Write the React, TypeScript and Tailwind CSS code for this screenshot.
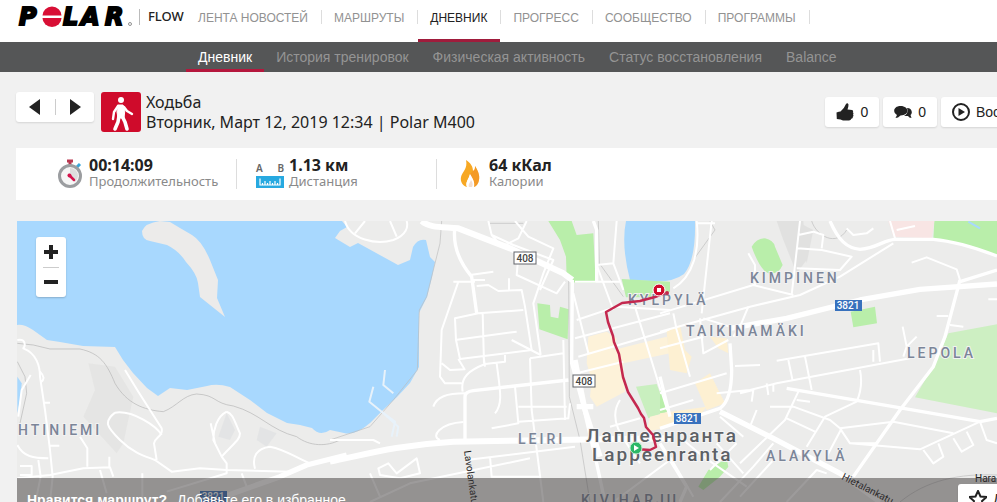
import React from "react";

const sections = ["ЛЕНТА НОВОСТЕЙ", "МАРШРУТЫ", "ДНЕВНИК", "ПРОГРЕСС", "СООБЩЕСТВО", "ПРОГРАММЫ"];
const pages = ["Дневник", "История тренировок", "Физическая активность", "Статус восстановления", "Balance"];

function PolarLogo() {
  return (
    <svg width="118" height="34" viewBox="0 0 118 34" role="img" aria-label="Polar">
      <g
        className="fill-black stroke-black text-[24px] font-bold italic font-['DejaVu_Sans',sans-serif]"
        strokeWidth="2"
      >
        <text x="3" y="25">P</text>
        <text x="47" y="25">L</text>
        <text x="65" y="25">A</text>
        <text x="89" y="25">R</text>
      </g>
      <path d="M26.500 15.500a9.500 9 0 0 1 19 0Z" fill="#d80f35" />
      <path d="M26.500 18a9.500 9 0 0 0 19 0Z" fill="#d80f35" />
      <circle cx="114" cy="24" r="1.5" fill="none" stroke="#777" strokeWidth="0.8" />
    </svg>
  );
}

function Header() {
  return (
    <header>
      <div className="flex h-[42px] items-stretch bg-white pl-4">
        <a href="#home" className="w-[123px]">
          <PolarLogo />
        </a>
        <a href="#flow" className="flex w-[47px] items-center pb-2 text-[13px] font-medium text-[#222] font-['Noto_Sans',sans-serif]">
          <span className="mr-2 h-4 w-px bg-[#bbb]" />
          FLOW
        </a>
        <nav className="flex text-[12px]">
          {sections.map((s) => (
            <div key={s} className="flex">
              <a
                href="#section"
                className={
                  s === "ДНЕВНИК"
                    ? "flex items-center border-b-[3px] border-[#a01c3c] pr-[13px] pb-1 pl-3 text-[#222]"
                    : "flex items-center border-b-[3px] border-transparent pr-[13px] pb-1 pl-3 text-[#929292]"
                }
              >
                {s}
              </a>
              <span className="mt-[10px] h-[14px] w-px bg-[#ddd]" />
            </div>
          ))}
        </nav>
      </div>
      <nav className="flex h-[30px] bg-[#555657] pl-[186px] text-[14px]">
        {pages.map((p) => (
          <a
            key={p}
            href="#page"
            className={
              p === "Дневник"
                ? "flex items-center border-b-[3px] border-[#b5173d] px-3 pt-[3px] text-white"
                : "flex items-center border-b-[3px] border-transparent px-3 pt-[3px] text-[#949494]"
            }
          >
            {p}
          </a>
        ))}
      </nav>
    </header>
  );
}

const pill =
  "flex h-[30px] items-center gap-[6px] rounded-[3px] bg-white px-[11px] text-[14px] text-[#222] shadow-[0_1px_2px_rgba(0,0,0,0.12)]";

function SessionBar() {
  return (
    <div className="flex items-start pt-5 pl-4">
      <div className="flex h-[30px] w-[78px] items-center justify-between rounded-[3px] bg-white px-3 shadow-[0_1px_2px_rgba(0,0,0,0.12)]">
        <button aria-label="Предыдущая">
          <svg width="13" height="16" viewBox="0 0 13 16"><path d="M12 0v16L1 8Z" fill="#222" /></svg>
        </button>
        <span className="h-4 w-px bg-[#ccc]" />
        <button aria-label="Следующая">
          <svg width="13" height="16" viewBox="0 0 13 16"><path d="M1 0v16L12 8Z" fill="#222" /></svg>
        </button>
      </div>
      <div className="ml-[7px] h-10 w-10 rounded-[3px] bg-[#cf0b2b]">
        <svg width="40" height="40" viewBox="0 0 40 40" fill="none" stroke="#fff" strokeLinecap="round" strokeLinejoin="round">
          <circle cx="20" cy="8" r="3" fill="#fff" stroke="none" />
          <path d="M17 13h5l2 4-1 9h-6l-1-6Z" fill="#fff" strokeWidth="1" />
          <path d="m17 14-4 6-1 7M23 15l3 4 5 3" strokeWidth="2.4" />
          <path d="m18 24-1 6-3 7M21 24l3 6 2 7" strokeWidth="3.6" />
        </svg>
      </div>
      <h1 className="ml-[5px] flex-1 text-[16px] leading-5 text-[#222] font-['Noto_Sans',sans-serif]">
        Ходьба
        <br />
        Вторник, Март 12, 2019 12:34 | Polar M400
      </h1>
      <div className="mt-[5px] flex gap-1">
        <button className={pill}>
          <svg width="18" height="18" viewBox="0 0 18 18" fill="#222">
            <path d="M.5 9.500Q3 8.500 4.500 8.500 8.500 5 10 1q1.500-1.500 2.500.500Q12.500 4 11.500 6.500L16 7q1.800.8.800 2.300 1.200 1 .2 2.300 1 1.200-.2 2.200.4 1.700-1.500 2-.5 1.700-2.300 1.700L7 17.500 4.500 16.500.8 16Z" />
          </svg>
          0
        </button>
        <button className={pill}>
          <svg width="18" height="14" viewBox="0 0 18 14" fill="#222">
            <path d="M13 3c5 0 6 5 3.500 7l1 3q-2.500 0-3.500-2L10 11q5-3 3-8Z" />
            <path d="M6.500 1c9 0 9.500 9.500 0 9.500Q4 13 1.500 13L3 10C-2 7 0 1 6.500 1Z" />
          </svg>
          0
        </button>
        <button className={pill + " w-[160px]"}>
          <svg width="18" height="18" viewBox="0 0 18 18">
            <circle cx="9" cy="9" r="8" fill="none" stroke="#222" strokeWidth="2" />
            <path d="M6.500 5v8l6.500-4Z" fill="#222" />
          </svg>
          Вос
        </button>
      </div>
    </div>
  );
}

function Stopwatch() {
  return (
    <svg width="26" height="30" viewBox="0 0 26 30">
      <path d="M10 2h6M13 2v5" stroke="#b93850" strokeWidth="3" />
      <path d="m20 8 3-3" stroke="#3aa6d8" strokeWidth="3" />
      <circle cx="13" cy="17" r="10.500" fill="#f6f6f6" stroke="#9b9da0" strokeWidth="3" />
      <path d="M13 9a8 8 0 0 1 8 8 8 8 0 0 1-3 6l-5-6Z" fill="#dedede" />
      <path d="m12 16 5 5" stroke="#d4144c" strokeWidth="2.500" strokeLinecap="round" />
      <circle cx="12.500" cy="16.500" r="2" fill="#d4144c" />
    </svg>
  );
}

function Ruler() {
  return (
    <div className="w-7 font-['Noto_Sans',sans-serif]">
      <div className="flex justify-between text-[10px] leading-4 font-semibold text-[#666]">
        <span>A</span>
        <span>B</span>
      </div>
      <svg width="28" height="12" viewBox="0 0 28 12">
        <path d="M0 0h28v12H0Z" fill="#27a9e0" />
        <path d="M4 2.500v6.500h20V2.500M9 5v4M14 5v4M19 5v4M6.500 7v2M11.500 7v2M16.500 7v2M21.500 7v2" fill="none" stroke="#fff" strokeWidth="1.200" />
      </svg>
    </div>
  );
}

function Flame() {
  return (
    <svg width="20" height="28" viewBox="0 0 20 28">
      <path d="M6 0c5 3 7 7 7 11 2-1 2-3 2-5 3 5 5 9 4 14-.5 3-2 6-5 7 1-5-1-8-4-13-1 5-5 8-3 13C3 26 0 22 1 17 2 12 8 9 6 0Z" fill="#f7a823" />
      <path d="M10 14c3 5 5 8 4 13H7c-2-5 2-8 3-13Z" fill="#fff" />
      <path d="M11 20c2 3 2 5 1 7H9c-1-3 1-4 2-7Z" fill="#f3ded0" />
      <path d="M15 6c3 5 5 9 4 14-.5 3-2 6-5 7 1-5-1-8-4-13l3-3c2-1 2-3 2-5Z" fill="#f28c28" opacity=".5" />
    </svg>
  );
}

const stats = [
  { icon: <Stopwatch />, value: "00:14:09", label: "Продолжительность" },
  { icon: <Ruler />, value: "1.13 км", label: "Дистанция" },
  { icon: <Flame />, value: "64 кКал", label: "Калории" },
];

function Stats() {
  return (
    <dl className="mt-4 ml-4 flex h-[52px] items-center bg-white pl-5">
      {stats.map((s, i) => (
        <div key={s.label} className="flex w-[200px] items-center">
          <div className={i === 0 ? "h-[30px] w-px" : "h-[30px] w-px bg-[#ddd]"} />
          <div className="mr-[5px] ml-[19px] flex w-7 justify-center">{s.icon}</div>
          <div className="flex flex-col-reverse pb-[2px] font-['Noto_Sans',sans-serif]">
            <dt className="text-[13px] leading-4 text-[#8a8a8a]">{s.label}</dt>
            <dd className="text-[16px] leading-4 font-bold text-[#222]">{s.value}</dd>
          </div>
        </div>
      ))}
    </dl>
  );
}

// The map sheet is drawn in three tiles at triple scale; labels and markers sit on top at 1:1.
function WestTile() {
  return (
    <g>
      <path d="M265 460 345 470 400 560 370 700 350 730 250 620 285 540Z" fill="#e2e2e1" opacity=".7" />
      <path d="M680 610 705 660 690 690 655 680ZM780 650 830 670 800 710 770 690Z" fill="#e0e1e2" opacity=".7" />
      <path d="M52 500 65 520 62 560 52 610Z" fill="#a8d8fe" />
      <path d="M52 455 75 500 80 550 60 640M52 400 100 405 150 417H240C300 430 320 460 345 520 380 580 430 600 490 605 530 590 550 555 590 552 650 555 640 580 700 588 780 610 810 660 890 680 930 710 980 710 1020 690" stroke="#b5b5b5" strokeWidth="2" />
      <g stroke="#fff" strokeWidth="6">
        <path d="M52 390C80 385 75 410 70 415 110 430 120 470 120 500L135 600 150 720 158 800 150 876M92 495 65 540 55 620M120 485q20 20 2 32M130 578h20M148 707h30" />
        <path d="M375 480 415 545 485 655C490 680 465 680 462 700L470 750M345 608C400 600 470 650 485 675M345 608C310 635 320 650 360 690 400 730 440 740 465 750L515 785 600 775 680 780 870 785" />
        <path d="M680 605C650 620 640 660 640 690L665 740C700 700 720 690 720 670 705 640 700 610 680 605M632 640 645 700M665 740 680 760V790L500 845M765 776C755 740 770 715 810 710 860 720 880 740 930 760M725 790 740 830" />
        <path d="M52 705C70 740 100 745 145 745M240 680 262 715V770M60 768H95V795H60M115 750 122 800 110 860M52 805 150 795 250 775 330 772 340 800M328 740V770M300 780 320 850M427 790V876" />
      </g>
      <path d="M1040 735 920 765 840 800 700 850 600 890" stroke="#fff" strokeWidth="16" />
    </g>
  );
}

function CentreTile() {
  return (
    <g>
      <path d="M655 33H725L740 75 790 70 797 218H735L710 205 708 140 690 90ZM622 280 660 285 662 320 685 325 690 290 716 298 713 388 628 358ZM875 207 1020 215 1020 245 960 262H888Z" fill="#b9eeaa" />
      <path d="M918 530 980 522 1012 605 955 625Z" fill="#c9efbf" />
      <path d="M775 380 830 365 860 385 850 420 1010 380 1020 430 880 460 885 545 800 590 780 560 785 510 770 460ZM960 620 1020 605V650L950 665Z" fill="#fdf2d9" />
      <g stroke="#bdbdbd" strokeWidth="2">
        <path d="M335 33 330 100 290 260 268 300 262 480 190 570 120 650 0 690M716 200 718 560 750 690 780 876M480 40H580M805 33 808 160 880 260" />
      </g>
      <g stroke="#fff" strokeWidth="6">
        <path d="M45 33C60 90 140 105 190 90 230 75 235 50 230 33M105 33 75 70M180 33 200 80M475 33 485 75 550 105 670 150 630 240M485 75 515 110 565 85 590 33M555 33 595 80 670 115 640 190 610 280 632 435M565 140 560 195 680 250 705 215" />
        <path d="M420 195 490 185M425 210H465M440 228 475 225 505 243 575 240 585 290 605 420 390 447 378 390 375 325 445 310 580 300M385 215 335 360 330 500 345 520H395M458 310 462 460M370 215H435M375 390 560 365M385 447 405 480M537 205V240M335 460 360 480 405 478M525 435V455L465 462C420 480 390 500 398 545M500 460C510 540 520 580 495 610M310 590C320 560 350 550 405 550M460 435 465 470" />
        <path d="M600 445 605 600 640 876M600 445 700 430M545 390 632 435M555 530 565 640 485 655M565 590H710M565 635 715 625 720 580M700 390 705 630M740 330 860 290 1020 300M735 385 1020 310M745 440 1020 360M740 490 880 455M800 165 850 160 860 33M800 165 850 300M730 250 775 430M915 290 1010 600M870 570C850 600 845 640 890 700L930 760M840 650 930 625M850 160 880 240M735 215 870 215" />
        <path d="M480 740 485 800H630M410 750 735 710M145 775 175 760 200 790 260 745 270 790 210 805 150 795ZM120 790 150 860M330 690C300 680 330 640 400 636M0 690 130 690 150 700M120 876 240 820 600 745M850 876 1020 750" />
        <path d="M165 480 160 525 190 550M130 530 118 575 155 605 205 650 200 680M155 605 195 635 185 680" stroke="#e8f2fa" />
      </g>
      <g stroke="#fff" strokeWidth="10">
        <path d="M375 50C365 120 400 170 425 200L440 310M405 690V560Q405 545 430 542L715 510M790 33 800 60V215M727 210 725 460 760 590 800 760 825 876" />
      </g>
      <path d="M275 33C300 55 340 50 385 55L540 115 700 190 727 210" stroke="#fff" strokeWidth="18" />
      <path d="M0 755C100 735 200 705 370 695L1020 685" stroke="#fff" strokeWidth="18" />
      <path d="M735 450 765 600 810 740M740 590 790 590" stroke="#fff" strokeWidth="16" />
    </g>
  );
}

function EastTile() {
  return (
    <g>
      <path d="M350 33 430 33 440 150 410 190 370 90ZM420 40 460 60 440 160Z" fill="#dddddc" opacity=".7" />
      <path d="M275 110Q290 85 315 85 340 90 345 110L368 165Q355 195 325 190 300 180 275 110ZM572 305 645 290 651 340 580 352ZM823 33H1011V138L900 100 820 88ZM0 540 20 605 0 615ZM145 780 200 745 205 770 180 800 130 840 115 830Z" fill="#b9eeaa" />
      <path d="M865 370 1011 343V610L765 562 830 450Z" fill="#cdefc2" />
      <path d="M685 33H823L815 85 700 80Z" fill="#f8e5e4" />
      <path d="M20 365 60 345 75 420 95 440 80 490 30 480ZM150 380 200 385 205 430 175 415ZM105 520 150 490 195 580 140 600ZM0 610 140 590 110 630 0 650Z" fill="#fdf0d2" />
      <path d="M150 33 165 60 100 150M455 33C470 80 530 110 560 60M720 876C800 810 900 790 1011 795" stroke="#bdbdbd" strokeWidth="2" />
      <path d="M925 35 960 55" stroke="#a8d8fe" strokeWidth="6" />
      <g stroke="#fff" strokeWidth="6">
        <path d="M110 33C120 120 100 200 40 235M155 33 125 310M110 40H165M0 310 280 225 400 255M420 33 395 255M415 75 460 65 490 75 485 115M412 115 485 120 575 140 540 180 410 175M265 130 285 165V225M0 365 270 290 420 255 540 200 700 100M40 310 50 360 90 500M560 55 580 75 620 70 640 55M690 33 705 85M710 60 765 48M755 158 800 142 890 178 900 210M870 345 910 350M830 318H865M985 268H1011" />
        <path d="M265 290 240 350 220 380M120 325 130 430 205 390M130 325 210 350M0 415 130 380M225 468 300 465M0 550 200 490M0 600 100 570M350 452 655 400 660 455M385 450 397 508M435 440 455 540M640 420V455M170 550 270 540 350 520 750 445M728 350 740 410 730 440M740 410 770 380M320 520 325 555M340 520V545M240 550 280 540 275 575M600 480Q610 530 590 575L495 620 440 710M415 545 375 630 240 760M330 590 400 590 510 630 540 655 570 700 780 718 960 635M540 655 700 635 880 670M380 625 465 665M410 570 450 575M545 655 500 740M570 700H650M790 720 820 760 850 740 835 700M880 685 905 725 940 705 920 665M960 635 980 690 1011 700M240 630 270 650 290 600M180 620 250 680M230 700 150 780M170 700 250 790M30 740 100 860M70 690 130 740 260 830M240 860 340 750M380 876 470 780 500 790M180 876 280 770 340 700" />
      </g>
      <g stroke="#fff" strokeWidth="10">
        <path d="M510 33C535 90 560 115 600 118 650 115 670 90 705 88H820Q900 95 1011 138M210 400 215 480Q215 570 180 595L0 655M900 210 855 380 820 470 720 600 580 800M380 535 700 590 960 635 1011 625M900 215 1011 180M0 500 30 620M0 700 80 830 60 876" />
      </g>
      <path d="M210 355 380 325 600 270 780 238 1011 222" stroke="#fff" strokeWidth="16" />
      <path d="M180 605 340 685 540 790 660 876" stroke="#fff" strokeWidth="16" />
    </g>
  );
}

const districts = [
  { name: "HTINIEMI", x: 18, y: 435 },
  { name: "KIMPINEN", x: 750, y: 283 },
  { name: "KYLPYLÄ", x: 628, y: 305 },
  { name: "TAIKINAMÄKI", x: 686, y: 336 },
  { name: "LEPOLA", x: 907, y: 358 },
  { name: "LEIRI", x: 518, y: 444 },
  { name: "ALAKYLÄ", x: 766, y: 461 },
  { name: "KIVIHARJU", x: 581, y: 505 },
];

const shields = [
  { no: "408", x: 514, y: 252, blue: false },
  { no: "408", x: 573, y: 375, blue: false },
  { no: "3821", x: 835, y: 300, blue: true },
  { no: "3821", x: 674, y: 413, blue: true },
  { no: "3821", x: 200, y: 491, blue: true },
];

function RouteMap() {
  return (
    <svg className="block h-full w-full font-['Roboto',sans-serif]" role="img" aria-label="Lappeenranta">
      <g transform="translate(-17 -221)">
        <g fill="none" strokeLinejoin="round">
          <path
            fill="#a8d8fe"
            d="M17 221H342L347 227 340 231 335 238 350 247 358 243 398 265 410 260 413 247Q418 238 426 240L430 257 435 262 432 277 427 297 419 313V367L410 383 397 397 383 410 370 423Q355 436 344 433L330 430Q320 437 312 428L300 425 287 423 267 413 250 400 230 387Q217 383 207 386L187 390 170 388 158 396 147 388 133 373 123 360 115 347 83 346 60 342 47 340 33 330Q24 324 17 325Z"
          />
          <path
            fill="#ecebea"
            d="M160 221Q145 223 142 231 142 240 150 241L167 245Q179 251 186 262 197 274 198 283L200 297 225 317 217 298 218 280 210 260Q202 241 192 235L180 228 170 222Z"
          />
          <path fill="#a8d8fe" d="M626 221H695Q696 260 684 274 672 283 650 281L630 280Q621 245 626 221Z" />
          <g transform="translate(0 210) scale(0.33333)"><WestTile /></g>
          <g transform="translate(330 210) scale(0.33333)"><CentreTile /></g>
          <g transform="translate(660 210) scale(0.33333)"><EastTile /></g>
        </g>
        <g
          className="fill-[#7b8598] stroke-[#f2f2f2] text-[14px] font-medium tracking-[3px]"
          strokeWidth="2"
          paintOrder="stroke"
        >
          {districts.map((d) => (
            <text key={d.name} x={d.x} y={d.y}>{d.name}</text>
          ))}
        </g>
        <g className="fill-[#5d6166] stroke-[#f5f5f5] text-[19px] font-medium tracking-[2px]" strokeWidth="2" paintOrder="stroke">
          <text x="586" y="442">Лаппеенранта</text>
          <text x="592" y="461">Lappeenranta</text>
        </g>
        <g className="fill-[#222] text-[10px]">
          <text transform="translate(464 451) rotate(82)">Lavolankatu</text>
          <text transform="translate(841 479) rotate(27)">Hietalankatu</text>
          <text x="975" y="482">Hara</text>
        </g>
        {shields.map((s) => (
          <g key={s.no + s.x} className="text-[10px] font-medium">
            <rect
              x={s.x}
              y={s.y}
              width={s.blue ? 27 : 22}
              height={s.blue ? 11 : 12}
              fill={s.blue ? "#3871bd" : "#fff"}
              stroke={s.blue ? "none" : "#62656b"}
            />
            <text x={s.x + (s.blue ? 13 : 11)} y={s.y + (s.blue ? 9 : 10)} textAnchor="middle" fill={s.blue ? "#fff" : "#444"}>
              {s.no}
            </text>
          </g>
        ))}
        <path
          d="m665 293-10 4-15 4-18 2-16 9 2 10 5 14 1 6 5 12 4 23 4 12 1 3 10 16 3 6 3 4 2 9 7 8 3 12-6 3-15-1"
          fill="none"
          stroke="#c4284f"
          strokeWidth="2.5"
          strokeLinejoin="round"
        />
        <circle cx="667" cy="293" r="2" fill="#c4284f" />
        <circle cx="659" cy="290" r="6" fill="#cf0b2b" stroke="#fff" strokeWidth="1" />
        <rect x="657" y="288" width="4" height="4" fill="#fff" />
        <circle cx="636" cy="448" r="6" fill="#2bb866" stroke="#c5ecd2" strokeWidth="1" />
        <path d="m634 445 5 3-5 3Z" fill="#fff" />
      </g>
    </svg>
  );
}

export default function App() {
  return (
    <div className="h-screen overflow-hidden bg-[#f1f1f1] font-['Liberation_Sans',Arial,sans-serif] whitespace-nowrap">
      <div className="min-w-[1101px]">
        <Header />
        <SessionBar />
        <Stats />
        <section className="relative mt-[21px] ml-[17px] h-[305px] bg-[#ececeb]">
          <RouteMap />
          <div className="absolute top-4 left-[19px] flex h-[60px] w-[30px] flex-col items-center rounded-[3px] bg-white shadow-[0_1px_2px_rgba(0,0,0,0.2)]">
            <button aria-label="Увеличить" className="flex flex-1 items-center">
              <svg width="14" height="14" viewBox="0 0 14 14"><path d="M7 0v14M0 7h14" stroke="#222" strokeWidth="4" /></svg>
            </button>
            <span className="h-px w-4 bg-[#ccc]" />
            <button aria-label="Уменьшить" className="flex flex-1 items-center">
              <svg width="14" height="14" viewBox="0 0 14 14"><path d="M0 7h14" stroke="#222" strokeWidth="4" /></svg>
            </button>
          </div>
          <div className="absolute inset-x-0 bottom-0 flex h-12 items-start justify-between bg-[#3b3838]/50 pt-[6px] pl-[10px] text-white">
            <p className="pt-1 text-[14px] leading-6">
              <strong className="mr-[10px]">Нравится маршрут?</strong>
              Добавьте его в избранное
            </p>
            <button className={pill + " w-[143px]"}>
              <svg width="18" height="18" viewBox="0 0 18 18" fill="none" stroke="#222" strokeWidth="2">
                <path d="m9 1 2.500 5.500 6 .5-4.500 4 1.500 6L9 14l-5.500 3L5 11 .500 7l6-.5Z" />
              </svg>
              Д
            </button>
          </div>
        </section>
      </div>
    </div>
  );
}
